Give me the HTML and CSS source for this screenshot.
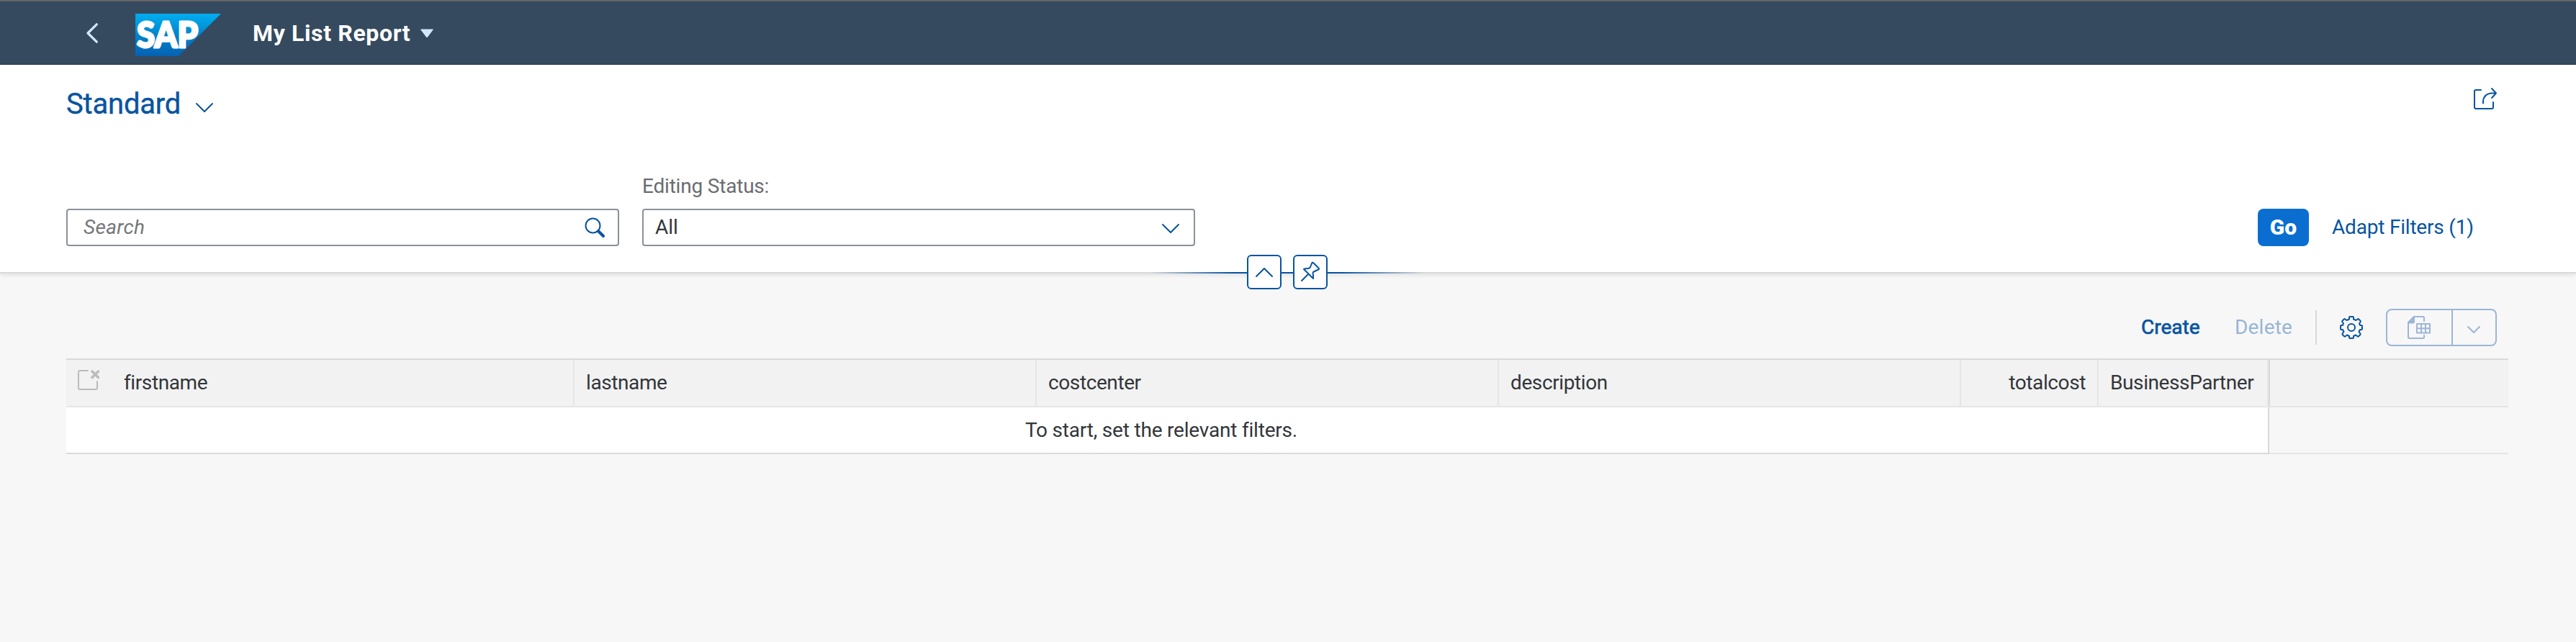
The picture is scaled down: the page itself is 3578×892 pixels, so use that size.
FILE: index.html
```html
<!DOCTYPE html>
<html lang="en">
<head>
<meta charset="utf-8">
<title>My List Report</title>
<link rel="stylesheet" href="styles.css">
</head>
<body>
<header class="shell">
  <svg class="back" viewBox="0 0 16 28"><path d="M14.3 1.8 2 14l12.300 12.200"/></svg>
  <svg class="logo" viewBox="0 0 120 59">
    <defs><linearGradient id="sap" x1="0" y1="0" x2="0" y2="1"><stop offset="0" stop-color="#00aeef"/><stop offset=".5" stop-color="#0084cd"/><stop offset="1" stop-color="#0561b2"/></linearGradient></defs>
    <path fill="url(#sap)" d="M0 0h119L60 59H0z"/>
    <text x="2" y="46.500" textLength="85" lengthAdjust="spacingAndGlyphs">SAP</text>
  </svg>
  <h1 class="app-title">My List Report</h1>
  <svg class="arrow" viewBox="0 0 18 13"><path d="M1 .5h16q1 0 .5 1L10 11.500q-1 1-2 0L.5 1.500Q0 .5 1 .5z"/></svg>
</header>
<section class="filters">
  <div class="variant-row">
    <h2 class="variant">Standard</h2>
    <svg class="variant-chev" viewBox="0 0 24 13"><path d="m1 1 11 11L23 1"/></svg>
    <svg class="share" viewBox="0 0 32 30"><path d="M10 3H3Q1 3 1 5v22q0 2 2 2h22q2 0 2-2v-7M13 21.500v-3Q14 8.500 24 7.500h7M25 1l6 6.500-6 6.500"/></svg>
  </div>
  <div class="filter-row">
    <div class="field search"><span>Search</span>
      <svg class="glass" viewBox="0 0 28 28"><circle cx="11.500" cy="11.500" r="10"/><path class="handle" d="m19 19 7 7"/></svg>
    </div>
    <div class="status">
      <label class="label">Editing Status:</label>
      <div class="field select"><span>All</span>
        <svg class="select-chev" viewBox="0 0 24 13"><path d="m1 1 11 11L23 1"/></svg>
      </div>
    </div>
    <button class="go">Go</button>
    <a class="adapt">Adapt Filters (1)</a>
  </div>
  <div class="handlebar">
    <button class="mini"><svg viewBox="0 0 44 44"><path d="m11 28 11-11 11 11"/></svg></button>
    <button class="mini"><svg viewBox="0 0 44 44"><path d="m10 34 9-9M26 9 34 17q0 2-2 2l-6 3q-1 1 0 4v5L13 18q1-1 6-1 2 0 3-2l2-5q1-2 2-1z"/></svg></button>
  </div>
</section>
<main class="content">
  <div class="toolbar">
    <a class="create">Create</a>
    <a class="delete">Delete</a>
    <i class="sep"></i>
    <svg class="gear" viewBox="0 0 32 32"><path d="M13 2q0-1 1-1h4q1 0 1 1v2.500l3.500 1.500 2-1.500q1-.8 1.700 0l2.300 2.300q.8.800 0 1.700L27 10.500l1 2.500h2q1 0 1 1v4q0 1-1 1h-2l-1.500 3 1.800 2.300q.7.900 0 1.700l-2.300 2.300q-.8.700-1.700 0L22 26.500 19 28v2q0 1-1 1h-4q-1 0-1-1v-2l-3-1.500-2.300 1.800q-.9.700-1.700 0L3.700 26q-.7-.8 0-1.700L5.500 22 4 19H2q-1 0-1-1v-4q0-1 1-1h2l1-2.500-1.500-2q-.8-.9 0-1.700l2.300-2.300q.7-.8 1.700 0l2 1.500L13 4.500z"/><circle cx="16" cy="16" r="5"/></svg>
    <div class="split">
      <span class="split-main"><svg class="export" viewBox="0 0 32 32"><path d="M23 7V2.500Q23 1 21.500 1H9L1 9v20.500Q1 31 2.500 31h19q1.500 0 1.500-1.500V27M13 11h18v12.500H13zM13 17.250h18M19 11v12.500M25 11v12.500"/><path class="fold" d="M1 9.500 9 1v7q0 1.500-1.500 1.500z"/></svg></span>
      <span class="split-menu"><svg class="menu-chev" viewBox="0 0 18 10"><path d="m1 1 8 8 8-8"/></svg></span>
    </div>
  </div>
  <div class="table">
    <div class="row head">
      <div class="cell"><svg class="clear" viewBox="0 0 30 28"><path d="M14 1H3Q1 1 1 3v22q0 2 2 2h22q2 0 2-2v-9"/><path class="x" d="m20 2 8.500 8.500m0-8.500-8.500 8.500"/></svg><span>firstname</span></div>
      <div class="cell"><span>lastname</span></div>
      <div class="cell"><span>costcenter</span></div>
      <div class="cell"><span>description</span></div>
      <div class="cell right"><span>totalcost</span></div>
      <div class="cell"><span>BusinessPartner</span></div>
      <div class="filler"></div>
    </div>
    <div class="row body">
      <div class="empty"><span>To start, set the relevant filters.</span></div>
      <div class="rest"></div>
    </div>
  </div>
</main>
</body>
</html>
```
FILE: styles.css
```css
* { box-sizing: border-box; }
body { margin: 0; height: 892px; background: #f7f7f7; color: #32363a; font: 28px/36px Roboto, sans-serif; overflow: hidden; }
h1, h2 { margin: 0; }
svg { display: block; flex: none; fill: none; stroke: #0854a0; stroke-width: 2; stroke-linecap: round; stroke-linejoin: round; overflow: visible; }
span, h1, h2, a, label { white-space: nowrap; }
button { font: inherit; padding: 0; }

.shell { display: flex; align-items: flex-start; height: 90px; background: #354a5f; border-top: 2px solid #666; border-bottom: 1px solid #283848; }
.back { width: 16px; height: 28px; margin: 30px 0 0 120px; stroke: #d1e8ff; stroke-width: 3.200; }
.logo { width: 120px; height: 59px; margin: 17px 0 0 52px; stroke: none; }
.logo text { font: 900 50px "Lato", sans-serif; fill: #fff; stroke: #fff; stroke-width: 3; }
.app-title { margin: 23px 0 0 43px; width: 233px; font-size: 32px; line-height: 42px; letter-spacing: .65px; color: #fff; font-weight: 700; }
.arrow { width: 18px; height: 13px; margin-top: 38px; fill: #d1e8ff; stroke: none; }

.filters { height: 290px; background: #fff; border-bottom: 2px solid #d9d9d9; box-shadow: 0 2px 6px rgba(0,0,0,.1); position: relative; }
.variant-row { display: flex; align-items: flex-start; height: 140px; padding: 0 110px 0 92px; }
.variant { width: 180px; margin-top: 29px; font-size: 40px; line-height: 52px; font-weight: 400; letter-spacing: -.2px; color: #0854a0; -webkit-text-stroke: .4px #0854a0; }
.variant-chev { width: 24px; height: 13px; margin-top: 53px; }
.share { width: 32px; height: 30px; margin: 32px 0 0 auto; }
.filter-row { display: flex; align-items: flex-end; height: 112px; padding: 0 142px 0 92px; }
.field { display: flex; align-items: center; justify-content: space-between; width: 768px; height: 52px; border: 2px solid #89919a; border-radius: 4px; background: #fff; }
.search { padding: 0 18px 0 22px; font-style: italic; letter-spacing: .3px; color: #74777a; }
.glass { width: 28px; height: 28px; }
.glass .handle { stroke-width: 4; }
.status { margin-left: 32px; }
.label { display: block; margin-bottom: 13px; letter-spacing: -.2px; color: #6a6d70; }
.select { padding: 0 20px 0 16px; }
.select-chev { width: 24px; height: 13px; margin-top: 3px; }
.go { width: 71px; height: 52px; margin-left: auto; border: 0; border-radius: 8px; background: #0a6ed1; color: #fff; font-size: 30px; font-weight: 900; }
.adapt { width: 197px; margin-left: 32px; line-height: 52px; letter-spacing: -.2px; color: #0854a0; }
.handlebar { position: absolute; left: 1598px; bottom: -24px; display: flex; gap: 16px; width: 380px; height: 48px; justify-content: center; background: linear-gradient(90deg, #0854a000, #0854a0 30%, #0854a0 70%, #0854a000) center 24px / 100% 2px no-repeat; }
.mini { width: 48px; height: 48px; border: 2px solid #0854a0; border-radius: 6px; background: #fff; }
.mini svg { width: 44px; height: 44px; }

.content { padding: 49px 94px 0 92px; }
.toolbar { display: flex; align-items: center; justify-content: flex-end; height: 52px; padding-right: 16px; color: #0854a0; }
.create { width: 131px; padding-left: 1px; -webkit-text-stroke: .7px #0854a0; }
.delete { width: 112px; letter-spacing: .2px; opacity: .4; }
.sep { width: 2px; height: 48px; background: #d9d9d9; margin-right: 32px; }
.gear { width: 32px; height: 32px; margin-right: 32px; }
.split { display: flex; width: 154px; height: 52px; border: 2px solid #9cb6d7; border-radius: 8px; }
.split svg { stroke: #9cb6d7; }
.split-main { width: 91px; padding: 8px 0 0 28px; border-right: 2px solid #9cb6d7; }
.export { width: 32px; height: 32px; }
.export .fold { fill: #9cb6d7; }
.split-menu { padding: 22px 0 0 20px; }
.menu-chev { width: 18px; height: 10px; }

.table { margin-top: 17px; border-top: 2px solid #d9d9d9; letter-spacing: -.4px; }
.row { display: grid; }
.head { grid-template-columns: 706px 642px 642px 642px 191px 236px 1fr; height: 66px; background: #f2f2f2; border-bottom: 2px solid #e5e5e5; }
.cell { display: flex; align-items: center; padding: 0 16px; border-right: 2px solid #e5e5e5; }
.right { justify-content: flex-end; }
.clear { width: 30px; height: 28px; margin: -9px 34px 0 0; stroke: #babbbc; }
.clear .x { stroke-width: 3.500; }
.filler { border-left: 2px solid #d9d9d9; }
.body { grid-template-columns: 3060px 1fr; height: 65px; }
.empty { display: flex; align-items: center; justify-content: center; padding-right: 16px; letter-spacing: -.2px; background: #fff; border-right: 2px solid #d9d9d9; border-bottom: 2px solid #d9d9d9; }
.rest { border-bottom: 2px solid #e5e5e5; }
```
